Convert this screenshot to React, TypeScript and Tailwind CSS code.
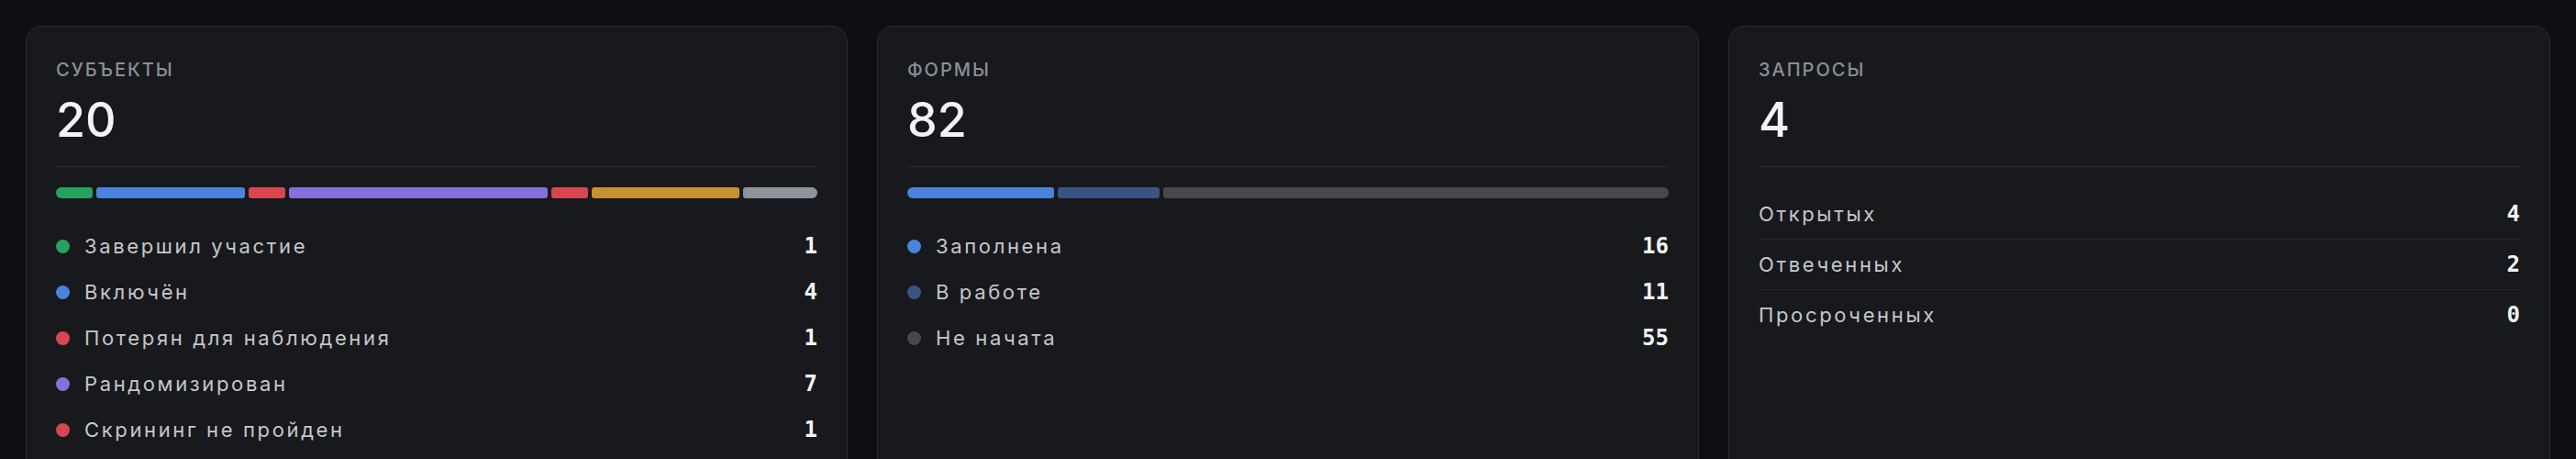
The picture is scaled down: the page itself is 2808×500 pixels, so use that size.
import React from 'react';

type Item = { label: string; value: number; color: string };

const subjects: Item[] = [
  { label: 'Завершил участие', value: 1, color: 'bg-[#25a35d]' },
  { label: 'Включён', value: 4, color: 'bg-[#4a83db]' },
  { label: 'Потерян для наблюдения', value: 1, color: 'bg-[#d8474f]' },
  { label: 'Рандомизирован', value: 7, color: 'bg-[#8770db]' },
  { label: 'Скрининг не пройден', value: 1, color: 'bg-[#d8474f]' },
  { label: 'Скрининг', value: 4, color: 'bg-[#c79030]' },
  { label: 'Выбыл', value: 2, color: 'bg-[#8e949c]' }
];

const forms: Item[] = [
  { label: 'Заполнена', value: 16, color: 'bg-[#4a83db]' },
  { label: 'В работе', value: 11, color: 'bg-[#3a5583]' },
  { label: 'Не начата', value: 55, color: 'bg-[#47484d]' }
];

const queries = [
  { label: 'Открытых', value: 4 },
  { label: 'Отвеченных', value: 2 },
  { label: 'Просроченных', value: 0 }
];

const numberFont = "font-['DejaVu_Sans_Mono',monospace] font-bold text-[24px] text-[#f2f3f5]";
const rowText = 'text-[22px] tracking-[0.12em] text-[#c5c7cb]';

function CardHeader({ title, total }: { title: string; total: number }) {
  return (
    <div className="border-b border-[#2a2c30] pb-6">
      <div className="text-[20px] leading-[30px] font-medium uppercase tracking-[0.1em] text-[#8a8f98]">
        {title}
      </div>
      <div className="mt-[14px] text-[52px] leading-none font-medium text-[#f2f3f5]">
        {total}
      </div>
    </div>
  );
}

/** Stacked bar plus legend rows, used by the first two cards. */
function BreakdownCard({ title, items }: { title: string; items: Item[] }) {
  const total = items.reduce((s, i) => s + i.value, 0);
  return (
    <div className="rounded-[18px] border border-[#2a2b30] bg-[#18191c] p-8">
      <CardHeader title={title} total={total} />
      <div className="mt-[22px] flex h-3 gap-1 overflow-hidden rounded-full">
        {items.map((i, idx) => (
          <div
            key={idx}
            className={`basis-0 rounded-[3px] ${i.color}`}
            style={{ flexGrow: i.value }}
          />
        ))}
      </div>
      <div className="mt-[37px] flex flex-col gap-5">
        {items.map((i, idx) => (
          <div key={idx} className="flex items-center justify-between leading-[30px]">
            <div className="flex items-center gap-4">
              <span className={`h-[15px] w-[15px] rounded-full ${i.color}`} />
              <span className={rowText}>{i.label}</span>
            </div>
            <span className={numberFont}>{i.value}</span>
          </div>
        ))}
      </div>
    </div>
  );
}

function QueriesCard() {
  // header shows the open ones
  const open = queries[0].value;
  return (
    <div className="rounded-[18px] border border-[#2a2b30] bg-[#18191c] p-8">
      <CardHeader title="Запросы" total={open} />
      <div className="mt-6">
        {queries.map((q, idx) => (
          <div
            key={q.label}
            className={`flex items-center justify-between py-3 leading-[30px] ${
              idx < queries.length - 1 ? 'border-b border-[#25272b]' : ''
            }`}
          >
            <span className={rowText}>{q.label}</span>
            <span className={numberFont}>{q.value}</span>
          </div>
        ))}
      </div>
    </div>
  );
}

export default function App() {
  return (
    <div className="min-h-screen bg-[#0e0f12] p-7 font-['Inter',sans-serif]">
      <div className="grid grid-cols-3 gap-8">
        <BreakdownCard title="Субъекты" items={subjects} />
        <BreakdownCard title="Формы" items={forms} />
        <QueriesCard />
      </div>
    </div>
  );
}
